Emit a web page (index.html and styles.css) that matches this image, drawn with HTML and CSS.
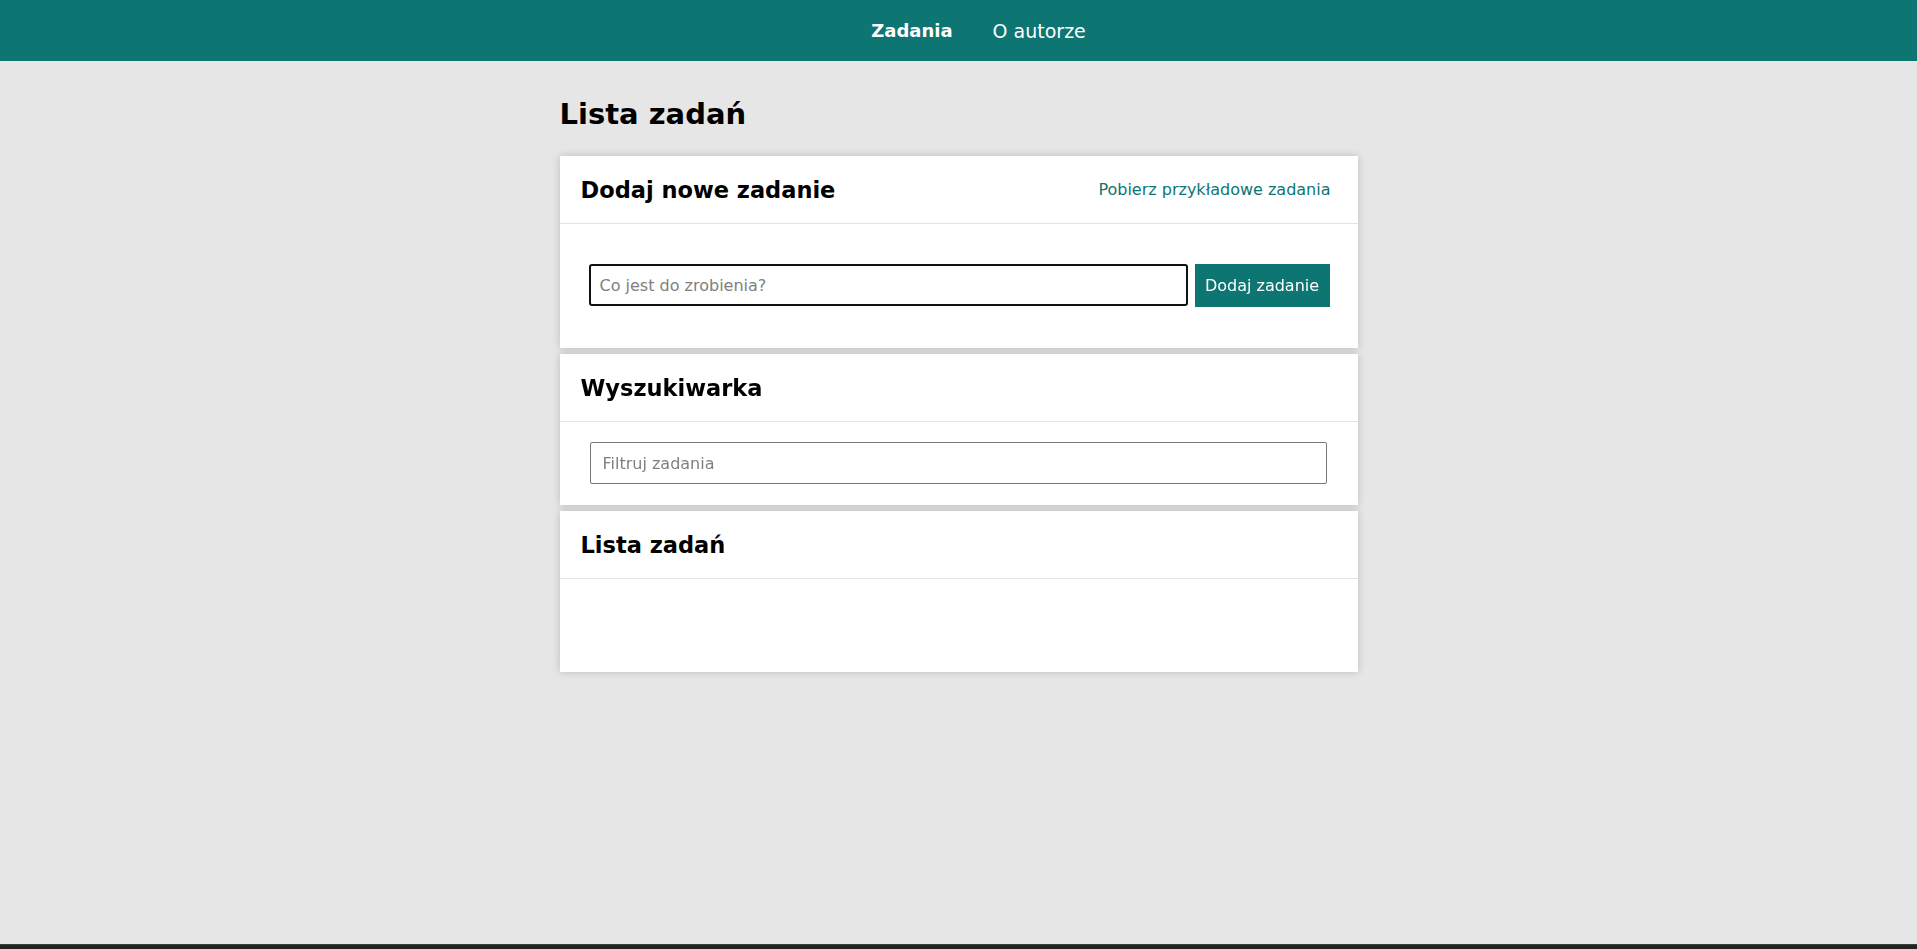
FILE: index.html
```html
<!DOCTYPE html>
<html lang="pl">
<head>
<meta charset="utf-8">
<title>Lista zadań</title>
<link rel="stylesheet" href="styles.css">
</head>
<body>
<nav class="topnav">
  <ul class="nav-list">
    <li><a class="nav-link active" href="#">Zadania</a></li>
    <li><a class="nav-link" href="#">O autorze</a></li>
  </ul>
</nav>
<main class="container">
  <h1 class="page-title">Lista zadań</h1>

  <section class="card">
    <header class="card-header">
      <h2 class="card-title">Dodaj nowe zadanie</h2>
      <a class="card-link" href="#">Pobierz przykładowe zadania</a>
    </header>
    <div class="card-body add-body">
      <form class="add-form">
        <input class="task-input" type="text" placeholder="Co jest do zrobienia?" autofocus>
        <button class="add-btn" type="button">Dodaj zadanie</button>
      </form>
    </div>
  </section>

  <section class="card">
    <header class="card-header">
      <h2 class="card-title">Wyszukiwarka</h2>
    </header>
    <div class="card-body search-body">
      <input class="filter-input" type="text" placeholder="Filtruj zadania">
    </div>
  </section>

  <section class="card">
    <header class="card-header">
      <h2 class="card-title">Lista zadań</h2>
    </header>
    <div class="card-body list-body"></div>
  </section>
</main>
<div class="bottom-strip"></div>
</body>
</html>
```
FILE: styles.css
```css
* { box-sizing: border-box; }
html, body { margin: 0; padding: 0; }
body {
  background: #e6e6e6;
  font-family: "DejaVu Sans", "Liberation Sans", sans-serif;
  color: #000;
  min-height: 949px;
}
.topnav {
  height: 61px;
  background: #0d7572;
  display: flex;
  align-items: center;
  justify-content: center;
}
.nav-list {
  list-style: none;
  margin: 0;
  padding: 0 0 0 40px;
  display: flex;
  gap: 40px;
}
.nav-link {
  color: #fff;
  text-decoration: none;
  font-size: 19px;
}
.nav-link.active { font-weight: bold; font-size: 18px; }
.container {
  width: 798px;
  margin: 0 auto;
  padding-top: 25px;
}
.page-title {
  font-size: 29px;
  font-weight: bold;
  margin: 0 0 14px 0;
  line-height: 56px;
}
.card {
  background: #fff;
  box-shadow: 0 0 8px rgba(0,0,0,0.18);
  margin-bottom: 6px;
}
.card-header {
  height: 68px;
  border-bottom: 1px solid #e2e2e2;
  display: flex;
  align-items: center;
  justify-content: space-between;
  padding: 0 27px 0 21px;
}
.card-title {
  margin: 0;
  font-size: 22.5px;
  font-weight: bold;
}
.card-link {
  color: #0d7572;
  text-decoration: none;
  font-size: 16px;
}
.add-body { padding: 40px 28px 41px 29px; }
.add-form { display: flex; gap: 7px; }
.task-input {
  flex: 1;
  height: 42px;
  border: 2px solid #111;
  border-radius: 3px;
  padding: 0 9px;
  font-family: inherit;
  font-size: 16px;
  outline: none;
}
.add-btn {
  height: 43px;
  width: 135px;
  background: #0d7572;
  color: #fff;
  border: none;
  font-family: inherit;
  font-size: 16px;
  padding: 0;
}
.search-body { padding: 20px 31px 21px 30px; }
.filter-input {
  width: 100%;
  height: 42px;
  border: 1px solid #767676;
  border-radius: 2px;
  padding: 0 12px;
  font-family: inherit;
  font-size: 16px;
}
::placeholder { color: #808080; }
.list-body { height: 93px; }
.bottom-strip {
  position: fixed;
  left: 0; right: 0; bottom: 0;
  height: 5px;
  background: #222;
  border-top: 1px solid #3c3c3c;
}
```
